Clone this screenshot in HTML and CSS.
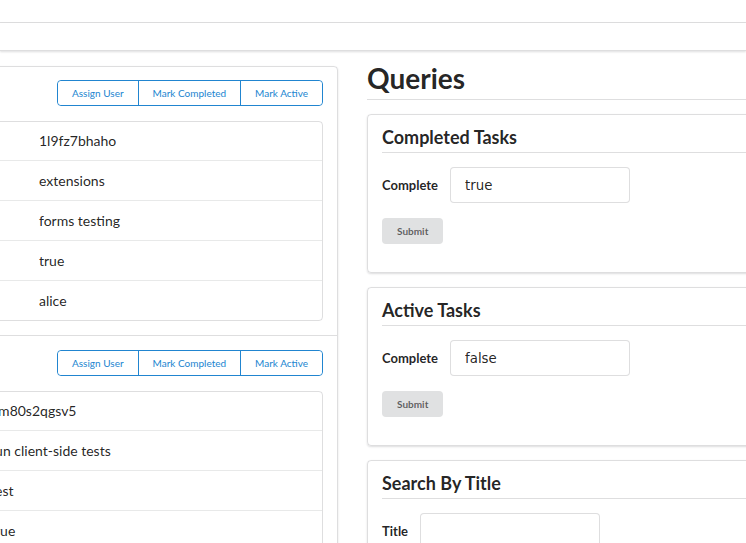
FILE: index.html
```html
<!DOCTYPE html>
<html lang="en">
<head>
<meta charset="utf-8">
<title>Tasks</title>
<link rel="stylesheet" href="styles.css">
</head>
<body>
<div class="menu menu-top"></div>
<div class="menu menu-sub"></div>
<div class="main">
  <div class="tasks">
    <div class="task">
      <div class="actions">
        <div class="btn-group">
          <button class="btn-basic">Assign User</button>
          <button class="btn-basic">Mark Completed</button>
          <button class="btn-basic">Mark Active</button>
        </div>
      </div>
      <div class="list list-a">
        <div class="row">1l9fz7bhaho</div>
        <div class="row">extensions</div>
        <div class="row">forms testing</div>
        <div class="row">true</div>
        <div class="row">alice</div>
      </div>
    </div>
    <div class="task">
      <div class="actions">
        <div class="btn-group">
          <button class="btn-basic">Assign User</button>
          <button class="btn-basic">Mark Completed</button>
          <button class="btn-basic">Mark Active</button>
        </div>
      </div>
      <div class="list list-b">
        <div class="row">4m80s2qgsv5</div>
        <div class="row">run client-side tests</div>
        <div class="row">test</div>
        <div class="row">true</div>
        <div class="row">bob</div>
      </div>
    </div>
  </div>
  <div class="queries">
    <h1 class="page-title">Queries</h1>
    <div class="card">
      <h3 class="card-title">Completed Tasks</h3>
      <div class="field">
        <label class="field-label">Complete</label>
        <input class="field-input" type="text" value="true">
      </div>
      <button class="btn-submit">Submit</button>
    </div>
    <div class="card">
      <h3 class="card-title">Active Tasks</h3>
      <div class="field">
        <label class="field-label">Complete</label>
        <input class="field-input" type="text" value="false">
      </div>
      <button class="btn-submit">Submit</button>
    </div>
    <div class="card">
      <h3 class="card-title">Search By Title</h3>
      <div class="field">
        <label class="field-label">Title</label>
        <input class="field-input" type="text" value="">
      </div>
      <button class="btn-submit">Submit</button>
    </div>
  </div>
</div>
</body>
</html>
```

FILE: styles.css
```css
html, body {
  margin: 0;
  padding: 0;
  overflow: hidden;
  background: #fff;
}
body {
  font-family: Lato, "Open Sans", sans-serif;
  font-size: 14px;
  color: rgba(0, 0, 0, 0.87);
}
.menu {
  background: #fff;
  border-bottom: 1px solid rgba(34, 36, 38, 0.15);
  box-shadow: 0 1px 2px 0 rgba(34, 36, 38, 0.15);
}
.menu-top { height: 22px; }
.menu-sub { height: 27px; }

.main {
  display: flex;
  align-items: flex-start;
  gap: 29px;
  margin-left: -62px;
}
.tasks {
  box-sizing: border-box;
  flex: 0 0 400px;
  margin-top: 15px;
  border: 1px solid rgba(34, 36, 38, 0.15);
  border-radius: 4px;
  box-shadow: 0 1px 2px 0 rgba(34, 36, 38, 0.15);
}
.task {
  padding: 14px;
}
.task:first-child {
  padding-top: 13px;
}
.task + .task {
  border-top: 1px solid rgba(34, 36, 38, 0.15);
}
.actions {
  display: flex;
  justify-content: flex-end;
  margin-bottom: 15px;
}
.btn-group {
  display: flex;
  border: 1px solid #2185d0;
  border-radius: 4px;
  height: 24px;
}
.btn-basic {
  font-family: Lato, sans-serif;
  font-size: 10px;
  color: #2185d0;
  background: #fff;
  border: none;
  padding: 0 14px;
  margin: 0;
  border-radius: 0;
}
.btn-basic + .btn-basic {
  border-left: 1px solid #2185d0;
}
.btn-group .btn-basic:first-child { border-radius: 4px 0 0 4px; }
.btn-group .btn-basic:last-child { border-radius: 0 4px 4px 0; }

.list {
  border: 1px solid rgba(34, 36, 38, 0.15);
  border-radius: 4px;
}
.row {
  height: 39px;
  line-height: 39px;
  white-space: nowrap;
}
.row:first-child {
  height: 38px;
  line-height: 38px;
}
.row + .row {
  border-top: 1px solid rgba(34, 36, 38, 0.1);
}
.list-a .row { padding-left: 85px; }
.list-b .row { padding-left: 36px; }

.queries {
  flex: 0 0 420px;
  margin-top: 9px;
}
.page-title {
  font-size: 28px;
  line-height: 36px;
  font-weight: 700;
  margin: 0 0 14px 0;
  padding-bottom: 3px;
  border-bottom: 1px solid rgba(34, 36, 38, 0.15);
}
.card {
  border: 1px solid rgba(34, 36, 38, 0.15);
  border-radius: 4px;
  box-shadow: 0 1px 2px 0 rgba(34, 36, 38, 0.15);
  padding: 14px 14px 28px 14px;
  margin-bottom: 14px;
}
.card-title {
  font-size: 18px;
  line-height: 23px;
  font-weight: 700;
  margin: -3px 0 14px 0;
  padding-bottom: 3px;
  border-bottom: 1px solid rgba(34, 36, 38, 0.15);
}
.field {
  display: flex;
  align-items: center;
  margin-bottom: 15px;
}
.field-label {
  font-size: 13px;
  font-weight: 700;
  margin-right: 12px;
}
.field-input {
  box-sizing: border-box;
  width: 180px;
  height: 36px;
  padding: 0 14px;
  border: 1px solid rgba(34, 36, 38, 0.15);
  border-radius: 4px;
  font-family: "DejaVu Sans", sans-serif;
  font-size: 13.33px;
  color: rgba(0, 0, 0, 0.87);
  outline: none;
}
.btn-submit {
  display: block;
  height: 26px;
  padding: 0 15px;
  border: none;
  border-radius: 4px;
  background: #e0e1e2;
  color: rgba(0, 0, 0, 0.6);
  font-family: Lato, sans-serif;
  font-size: 10px;
  font-weight: 700;
}
```
